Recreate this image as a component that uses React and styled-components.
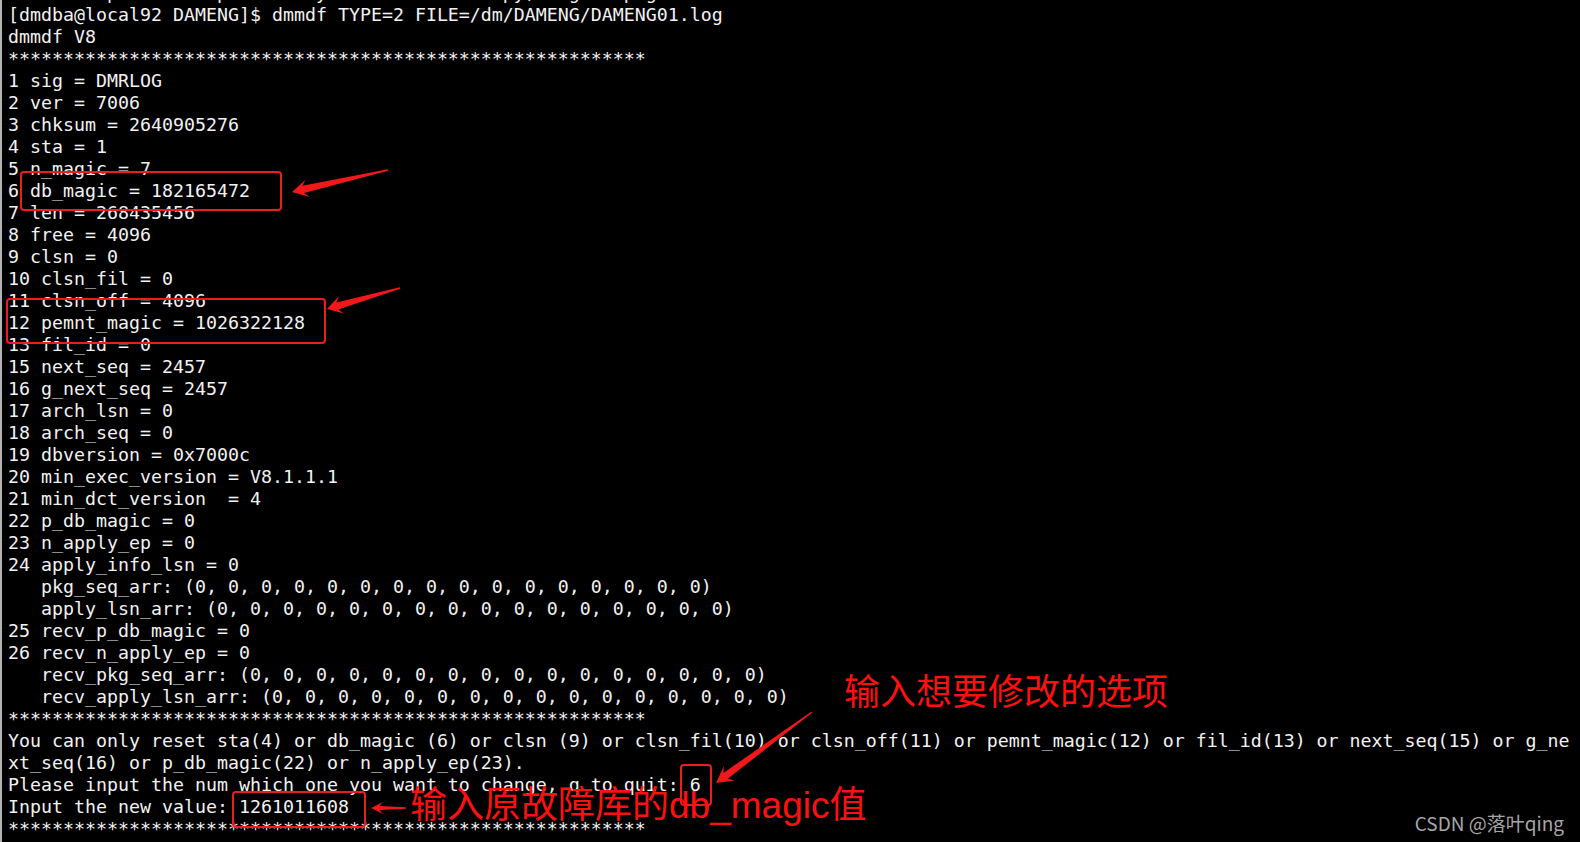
import React from 'react';
import styled, { createGlobalStyle } from 'styled-components';

const GlobalStyle = createGlobalStyle`
  html, body { margin: 0; padding: 0; background: #000; }
  body { width: 1580px; height: 842px; overflow: hidden; }
`

const Screen = styled.div`
  position: relative;
  width: 1580px; height: 842px; overflow: hidden;
  background: #000;
  box-shadow: inset 2px 0 0 #b4b4b4;
`

const Terminal = styled.div`
  display: flex; flex-direction: column;
  padding: 4px 0 0 8px;
  font-family: "DejaVu Sans Mono", "Liberation Mono", monospace;
  font-size: 18.27px; line-height: 22px;
  color: #f2f2f2;
  white-space: pre;
`

const Line = styled.div`
  height: 22px;
  margin-top: ${props => props.$cut ? '-22px' : '0'};
`

const Mark = styled.div`
  position: absolute;
  left: ${props => props.$x}px; top: ${props => props.$y}px;
  width: ${props => props.$w}px; height: ${props => props.$h}px;
  border: 2px solid #ee1c1c; border-radius: 4px;
  box-sizing: border-box;
`

const Note = styled.div`
  position: absolute;
  left: ${props => props.$x}px; top: ${props => props.$y}px;
  font-family: "Liberation Sans", "Noto Sans CJK SC", sans-serif;
  font-size: ${props => props.$size}px; line-height: 1;
  color: #ff1010;
  white-space: nowrap;
`

const Watermark = styled.div`
  position: absolute; right: 16px; bottom: 10px;
  font-family: "Noto Sans CJK SC", "Liberation Sans", sans-serif;
  font-size: 19px; line-height: 1;
  color: #a6a6a6;
`

const ArrowLayer = styled.svg`
  position: absolute; left: 0; top: 0;
  width: 1580px; height: 842px;
  pointer-events: none;
`

const zeros = '(' + Array(16).fill('0').join(', ') + ')'
const stars = '*'.repeat(58)

const lines = [
  'dmdba stop DAMENG up then try to restore a copy; log to pages',
  '[dmdba@local92 DAMENG]$ dmmdf TYPE=2 FILE=/dm/DAMENG/DAMENG01.log',
  'dmmdf V8',
  stars,
  '1 sig = DMRLOG',
  '2 ver = 7006',
  '3 chksum = 2640905276',
  '4 sta = 1',
  '5 n_magic = 7',
  '6 db_magic = 182165472',
  '7 len = 268435456',
  '8 free = 4096',
  '9 clsn = 0',
  '10 clsn_fil = 0',
  '11 clsn_off = 4096',
  '12 pemnt_magic = 1026322128',
  '13 fil_id = 0',
  '15 next_seq = 2457',
  '16 g_next_seq = 2457',
  '17 arch_lsn = 0',
  '18 arch_seq = 0',
  '19 dbversion = 0x7000c',
  '20 min_exec_version = V8.1.1.1',
  '21 min_dct_version  = 4',
  '22 p_db_magic = 0',
  '23 n_apply_ep = 0',
  '24 apply_info_lsn = 0',
  '   pkg_seq_arr: ' + zeros,
  '   apply_lsn_arr: ' + zeros,
  '25 recv_p_db_magic = 0',
  '26 recv_n_apply_ep = 0',
  '   recv_pkg_seq_arr: ' + zeros,
  '   recv_apply_lsn_arr: ' + zeros,
  stars,
  'You can only reset sta(4) or db_magic (6) or clsn (9) or clsn_fil(10) or clsn_off(11) or pemnt_magic(12) or fil_id(13) or next_seq(15) or g_ne',
  'xt_seq(16) or p_db_magic(22) or n_apply_ep(23).',
  'Please input the num which one you want to change, q to quit: 6',
  'Input the new value: 1261011608',
  stars,
]

// tip (hx,hy) -> tail (tx,ty), head length L, head half width W, shaft half width w
function arrowPoints(hx, hy, tx, ty, L, W, w) {
  const dx = tx - hx, dy = ty - hy
  const len = Math.hypot(dx, dy)
  const ux = dx / len, uy = dy / len
  const nx = -uy, ny = ux
  const p = (a, b) => `${(hx + ux * a + nx * b).toFixed(1)},${(hy + uy * a + ny * b).toFixed(1)}`
  return [p(0, 0), p(L, W), p(L * 0.72, w), p(len, 0.7), p(len, -0.7), p(L * 0.72, -w), p(L, -W)].join(' ')
}

const arrows = [
  [292, 192, 388, 170, 16, 8.8, 3.8],
  [327, 309, 400, 288, 15, 9, 3.6],
  [716, 783, 812, 712, 16.5, 9, 3.6],
  [371, 808, 406, 808, 12, 6, 2],
]

export default function App() {
  return (
    <Screen>
      <GlobalStyle />
      <Terminal>
        {lines.map((text, i) => <Line key={i} $cut={i === 0}>{text}</Line>)}
      </Terminal>

      <Mark $x={20} $y={171} $w={262} $h={40} />
      <Mark $x={6} $y={298} $w={320} $h={46} />
      <Mark $x={680} $y={764} $w={32} $h={42} />
      <Mark $x={232} $y={791} $w={134} $h={37} />

      <ArrowLayer viewBox="0 0 1580 842">
        {arrows.map((a, i) => <polygon key={i} points={arrowPoints(...a)} fill="#f01818" />)}
      </ArrowLayer>

      <Note $x={844} $y={675} $size={36}>输入想要修改的选项</Note>
      <Note $x={410} $y={787} $size={37}>输入原故障库的db_magic值</Note>

      <Watermark>CSDN @落叶qing</Watermark>
    </Screen>
  )
}
